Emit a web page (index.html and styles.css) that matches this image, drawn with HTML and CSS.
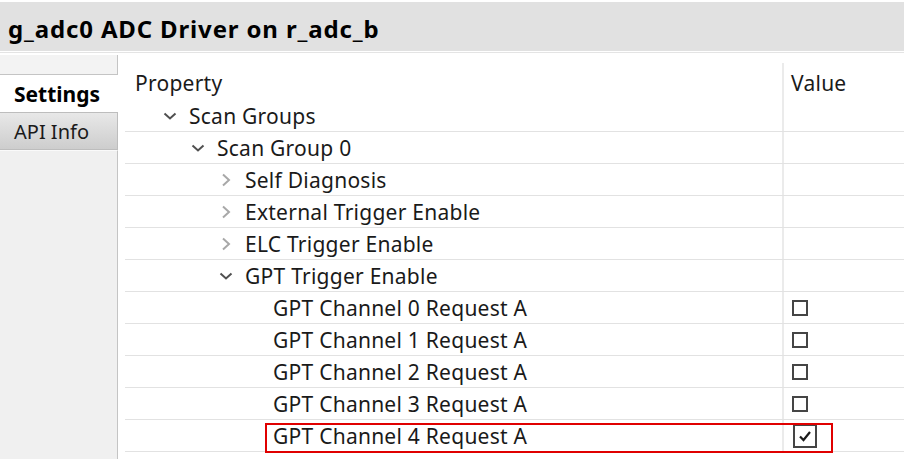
FILE: index.html
```html
<!DOCTYPE html>
<html>
<head>
<meta charset="utf-8">
<link rel="stylesheet" href="styles.css">
</head>
<body>
<div class="titlebar"><h1 class="title">g_adc0 ADC Driver on r_adc_b</h1></div>
<div class="sep"></div>
<div class="main">
  <div class="sidebar">
    <div class="tab-top"></div>
    <div class="tab tab-active">Settings</div>
    <div class="tab tab-inactive">API Info</div>
    <div class="tab-rest"></div>
  </div>
  <div class="grid">
    <div class="row head">
      <div class="cell prop head-prop">Property</div>
      <div class="cell val head-val">Value</div>
    </div>
    <div class="row">
      <div class="cell prop l0"><span class="chev"><svg width="14" height="8" viewBox="0 0 14 8"><path d="M1.5 1.5 L7 6.5 L12.5 1.5" fill="none" stroke="#505050" stroke-width="2"/></svg></span>Scan Groups</div>
      <div class="cell val"></div>
    </div>
    <div class="row">
      <div class="cell prop l1"><span class="chev"><svg width="14" height="8" viewBox="0 0 14 8"><path d="M1.5 1.5 L7 6.5 L12.5 1.5" fill="none" stroke="#505050" stroke-width="2"/></svg></span>Scan Group 0</div>
      <div class="cell val"></div>
    </div>
    <div class="row">
      <div class="cell prop l2"><span class="chev"><svg width="14" height="14" viewBox="0 0 14 14"><path d="M4 1.5 L10 7 L4 12.5" fill="none" stroke="#a8a8a8" stroke-width="2"/></svg></span>Self Diagnosis</div>
      <div class="cell val"></div>
    </div>
    <div class="row">
      <div class="cell prop l2"><span class="chev"><svg width="14" height="14" viewBox="0 0 14 14"><path d="M4 1.5 L10 7 L4 12.5" fill="none" stroke="#a8a8a8" stroke-width="2"/></svg></span>External Trigger Enable</div>
      <div class="cell val"></div>
    </div>
    <div class="row">
      <div class="cell prop l2"><span class="chev"><svg width="14" height="14" viewBox="0 0 14 14"><path d="M4 1.5 L10 7 L4 12.5" fill="none" stroke="#a8a8a8" stroke-width="2"/></svg></span>ELC Trigger Enable</div>
      <div class="cell val"></div>
    </div>
    <div class="row">
      <div class="cell prop l2"><span class="chev"><svg width="14" height="8" viewBox="0 0 14 8"><path d="M1.5 1.5 L7 6.5 L12.5 1.5" fill="none" stroke="#505050" stroke-width="2"/></svg></span>GPT Trigger Enable</div>
      <div class="cell val"></div>
    </div>
    <div class="row">
      <div class="cell prop l3">GPT Channel 0 Request A</div>
      <div class="cell val"><span class="cb"></span></div>
    </div>
    <div class="row">
      <div class="cell prop l3">GPT Channel 1 Request A</div>
      <div class="cell val"><span class="cb"></span></div>
    </div>
    <div class="row">
      <div class="cell prop l3">GPT Channel 2 Request A</div>
      <div class="cell val"><span class="cb"></span></div>
    </div>
    <div class="row">
      <div class="cell prop l3">GPT Channel 3 Request A</div>
      <div class="cell val"><span class="cb"></span></div>
    </div>
    <div class="row hl">
      <div class="cell prop l3">GPT Channel 4 Request A</div>
      <div class="cell val"><span class="cb cb-on"><svg width="16" height="16" viewBox="0 0 16 16"><path d="M3 8.5 L6.5 12 L13 4" fill="none" stroke="#1a1a1a" stroke-width="2.2"/></svg></span></div>
      <div class="highlight"></div>
    </div>
  </div>
</div>
</body>
</html>
```

FILE: styles.css
```css
* {
  box-sizing: border-box;
}
html, body {
  margin: 0;
  padding: 0;
  background: #ffffff;
  font-family: "Noto Sans", "Open Sans", sans-serif;
  color: #1a1a1a;
  overflow: hidden;
  height: 459px;
}
.titlebar {
  margin-top: 2px;
  height: 49px;
  background: #e1e1e1;
  display: flex;
  align-items: center;
  padding-top: 4px;
}
.title {
  margin: 0 0 0 8px;
  font-size: 24px;
  font-weight: 700;
  color: #000;
  letter-spacing: 0.85px;
}
.sep {
  height: 1px;
  margin-top: 1px;
  background: #e4e4e4;
}
.main {
  display: flex;
  height: 406px;
}
.sidebar {
  width: 118px;
  display: flex;
  flex-direction: column;
  flex: none;
}
.tab-top {
  height: 20px;
  margin-top: 2px;
  background: #f3f3f3;
  border-right: 1px solid #c4c4c4;
  border-bottom: 1px solid #c4c4c4;
}
.tab {
  padding-left: 14px;
  display: flex;
  align-items: center;
}
.tab-active {
  height: 37px;
  background: #fff;
  font-weight: 700;
  font-size: 21px;
  color: #000;
}
.tab-inactive {
  height: 38px;
  font-size: 20px;
  background: linear-gradient(#e8e8e8, #cdcdcd);
  border-top: 1px solid #bdbdbd;
  border-bottom: 1px solid #bdbdbd;
  border-right: 1px solid #bdbdbd;
}
.tab-rest {
  flex: 1;
  background: #f0f0f0;
  border-right: 1px solid #c4c4c4;
  border-top: 1px solid #fafafa;
}
.grid {
  flex: 1;
  min-width: 0;
  margin-left: 7px;
  display: flex;
  flex-direction: column;
}
.row {
  display: flex;
  height: 32px;
  border-bottom: 1px solid #e2e2e2;
  position: relative;
}
.row.head {
  height: 47px;
  border-bottom: none;
}
.cell {
  display: flex;
  align-items: center;
  font-size: 21px;
  letter-spacing: 0.25px;
  white-space: nowrap;
}
.prop {
  width: 657px;
  flex: none;
}
.val {
  flex: 1;
  min-width: 0;
  border-left: 2px solid #ebebeb;
  padding-left: 7px;
}
.head-prop {
  padding-left: 10px;
  padding-top: 12px;
}
.head .val {
  margin-top: 10px;
  padding-top: 2px;
}
.l0 { padding-left: 38px; }
.l1 { padding-left: 66px; }
.l2 { padding-left: 94px; }
.l3 { padding-left: 148px; }
.chev {
  width: 14px;
  margin-right: 12px;
  display: flex;
  align-items: center;
  justify-content: center;
}
.cb {
  flex: none;
  width: 16px;
  height: 16px;
  border: 2px solid #454545;
  background: #fff;
  margin-left: 1px;
}
.cb-on {
  width: 24px;
  height: 24px;
  margin-left: 2px;
  display: flex;
  align-items: center;
  justify-content: center;
}
.highlight {
  position: absolute;
  left: 140px;
  top: 3px;
  width: 568px;
  height: 30px;
  border: 2px solid #e00000;
}
```
